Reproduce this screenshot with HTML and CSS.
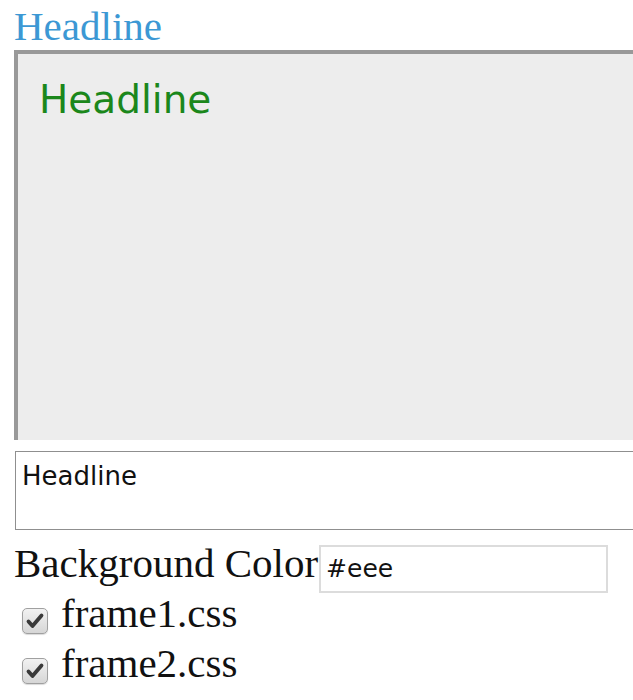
FILE: index.html
```html
<!DOCTYPE html>
<html>
<head>
<meta charset="utf-8">
<link rel="stylesheet" href="styles.css">
</head>
<body>
<div class="page">
  <h1 class="title">Headline</h1>
  <div class="frame">
    <h2 class="frame-title">Headline</h2>
  </div>
  <textarea class="editor" readonly>Headline</textarea>
  <div class="bg-row">
    <span class="bg-label">Background Color</span>
    <input class="bg-input" type="text" value="#eee">
  </div>
  <label class="check-row">
    <span class="box"><svg viewBox="0 0 26 26" width="26" height="26"><path d="M6.5 13.5 L10.5 18 L19.5 7.5" fill="none" stroke="#3a3a3a" stroke-width="3.8" stroke-linecap="round" stroke-linejoin="round"/></svg></span>
    <span class="check-text">frame1.css</span>
  </label>
  <label class="check-row">
    <span class="box"><svg viewBox="0 0 26 26" width="26" height="26"><path d="M6.5 13.5 L10.5 18 L19.5 7.5" fill="none" stroke="#3a3a3a" stroke-width="3.8" stroke-linecap="round" stroke-linejoin="round"/></svg></span>
    <span class="check-text">frame2.css</span>
  </label>
</div>
</body>
</html>
```
FILE: styles.css
```css
html, body {
  margin: 0;
  padding: 0;
  overflow: hidden;
  background: #fff;
}

.page {
  width: 633px;
  height: 700px;
  box-sizing: border-box;
  overflow: hidden;
  padding: 3px 0 0 14px;
  font-family: "Liberation Serif", "Times New Roman", serif;
  color: #111;
}

.title {
  margin: 0;
  font-family: "Liberation Serif", serif;
  font-weight: normal;
  font-size: 41px;
  line-height: 46px;
  color: #3c98d4;
}

.frame {
  margin-top: 1px;
  height: 390px;
  width: 660px;
  box-sizing: border-box;
  border-top: 4px solid #999;
  border-left: 4px solid #999;
  background: #ededed;
  padding: 23px 0 0 21px;
}

.frame-title {
  margin: 0;
  font-family: "DejaVu Sans", sans-serif;
  font-weight: normal;
  font-size: 39px;
  line-height: 45px;
  color: #1b871b;
}

.editor {
  display: block;
  margin: 11px 0 0 1px;
  width: 660px;
  height: 79px;
  box-sizing: border-box;
  border: 1px solid #8f8f8f;
  padding: 9px 6px;
  font-family: "DejaVu Sans", sans-serif;
  font-size: 26px;
  line-height: 30px;
  color: #111;
  resize: none;
  outline: none;
  background: #fff;
}

.bg-row {
  display: flex;
  align-items: baseline;
  margin-top: 8px;
  height: 50px;
  line-height: 50px;
  font-size: 41px;
}

.bg-label {
  color: #111;
}

.bg-input {
  margin-left: 1px;
  width: 289px;
  height: 48px;
  box-sizing: border-box;
  border: 2px solid #dcdcdc;
  padding: 0 5px;
  font-family: "DejaVu Sans", sans-serif;
  font-size: 25px;
  color: #111;
  outline: none;
  background: #fff;
}

.check-row {
  display: flex;
  align-items: flex-start;
  height: 50px;
  line-height: 50px;
  font-size: 41px;
  color: #111;
}

.box {
  margin: 20px 0 0 8px;
  width: 26px;
  height: 26px;
  box-sizing: border-box;
  border: 1.5px solid #a0a0a0;
  border-radius: 5px;
  background: linear-gradient(#f2f2f2, #d6d6d6);
  box-shadow: 0 1px 1px rgba(0,0,0,0.15);
  display: flex;
  align-items: center;
  justify-content: center;
  overflow: hidden;
}

.box svg {
  display: block;
  flex: none;
}

.check-text {
  margin-left: 13px;
}
```
